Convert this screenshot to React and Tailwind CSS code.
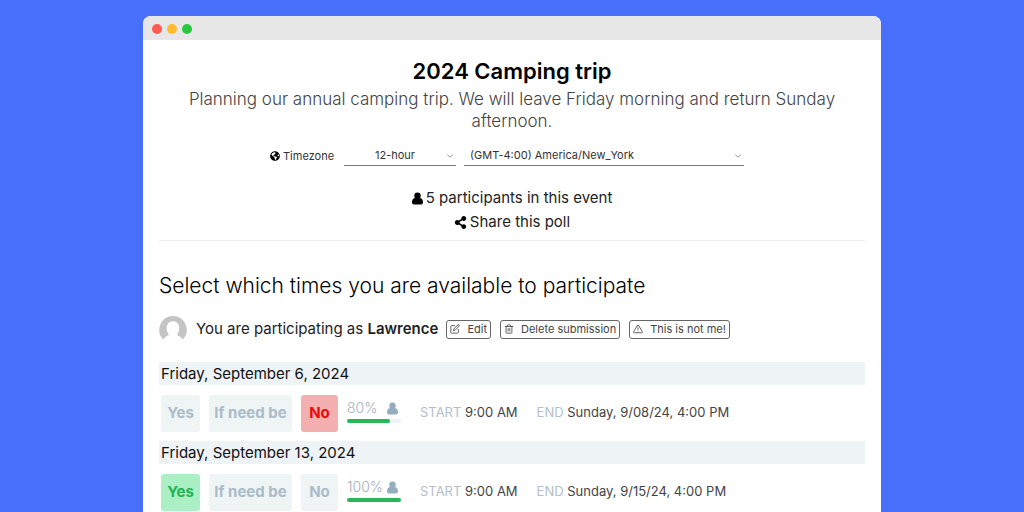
import React from "react";
import { FaGlobeAmericas, FaShareAlt } from "react-icons/fa";
import { FiEdit, FiTrash2, FiAlertTriangle, FiChevronDown } from "react-icons/fi";

const DATES = [
  { day: "Friday, September 6, 2024", answer: "No", percent: 80, start: "9:00 AM", end: "Sunday, 9/08/24, 4:00 PM" },
  { day: "Friday, September 13, 2024", answer: "Yes", percent: 100, start: "9:00 AM", end: "Sunday, 9/15/24, 4:00 PM" },
];

const CHOICES = [
  { label: "Yes", width: "w-[39px]", chosen: "bg-[#aaf0c4] text-[#22b455]" },
  { label: "If need be", width: "w-[83px]", chosen: "bg-[#fdeeb5] text-[#b98a08]" },
  { label: "No", width: "w-[37px]", chosen: "bg-[#f4b0b0] text-[#e80b0b]" },
];

function Person({ className }) {
  return (
    <svg viewBox="0 0 12 14" fill="currentColor" aria-hidden="true" className={className}>
      <circle cx="6" cy="4" r="3.500" />
      <path d="M2.600 6.600c.9 1.100 2 1.700 3.400 1.700s2.500-.6 3.400-1.700C11.300 6.900 12 8.800 12 11.200c0 1.500-.8 2.300-2.100 2.300H2.100C.8 13.500 0 12.700 0 11.200c0-2.400.7-4.300 2.600-4.600z" />
      <rect x="2.500" y="6.600" width="7" height="3" />
    </svg>
  );
}

function Avatar() {
  return (
    <svg viewBox="0 0 28 28" aria-hidden="true" className="size-7 shrink-0">
      <path
        fill="#c4c4c4"
        d="M14 1a13.800 13.800 0 0 1 9.700 23.500c-1-2-2.900-3-4.500-3.700-.9-.4-1.100-1.500-.5-2.300 1-1.300 1.600-3.200 1.600-5.300 0-4.200-2.500-7-6.300-7s-6.300 2.800-6.300 7c0 2.100.6 4 1.600 5.300.6.800.4 1.900-.5 2.300-1.600.7-3.500 1.700-4.500 3.700A13.800 13.800 0 0 1 14 1z"
      />
    </svg>
  );
}

function Picker({ label, className, selectClass, options }) {
  return (
    <div className={`grid items-center border-b border-[#777] ${className}`}>
      <select
        aria-label={label}
        className={`col-start-1 row-start-1 h-[19px] w-full appearance-none bg-transparent text-[11px] text-[#333] ${selectClass}`}
      >
        {options.map((o) => (
          <option key={o}>{o}</option>
        ))}
      </select>
      <FiChevronDown aria-hidden="true" className="pointer-events-none col-start-1 row-start-1 mr-px size-[10px] justify-self-end text-[#777]" />
    </div>
  );
}

function SmallButton({ icon: Icon, children }) {
  return (
    <button type="button" className="flex h-[19px] items-center gap-[7px] rounded-[3px] border border-[#666] px-[3px] text-[11px] text-[#444]">
      <Icon aria-hidden="true" className="size-[10px]" />
      {children}
    </button>
  );
}

function DateOption({ day, answer, percent, start, end }) {
  return (
    <section>
      <h3 className="h-[23px] bg-[#eef3f6] px-[2px] text-[15px] leading-[23px] text-[#111]">{day}</h3>
      <div className="flex h-14 items-center pl-[2px]">
        <div className="flex gap-[9px]">
          {CHOICES.map(({ label, width, chosen }) => (
            <button
              key={label}
              type="button"
              aria-pressed={label === answer}
              className={`h-[37px] rounded-[3px] text-[15px] font-bold ${width} ${label === answer ? chosen : "bg-[#eff4f5] text-[#aabcc8]"}`}
            >
              {label}
            </button>
          ))}
        </div>
        <div className="ml-[9px] flex w-[54px] flex-col gap-[3px] pb-[3px]">
          <div className="flex h-4 items-center justify-between pr-[3px] text-[14px] leading-4 font-light text-[#a3b0b8]">
            <span>{percent}%</span>
            <Person className="h-[13px] w-[11px] text-[#94adbf]" />
          </div>
          <div className="h-1 rounded-full bg-[#eef3f4]">
            <div className="h-1 rounded-full bg-[#27b859]" style={{ width: `${percent}%` }} />
          </div>
        </div>
        <p className="ml-[19px] text-[13px] text-[#444]">
          <span className="text-[#b3c0c7]">START</span> {start}
        </p>
        <p className="ml-[19px] text-[13px] text-[#444]">
          <span className="text-[#b3c0c7]">END</span> {end}
        </p>
      </div>
    </section>
  );
}

export default function App() {
  return (
    <div className="flex h-screen flex-col overflow-hidden bg-[#476ffa] px-[143px] pt-4 font-['Inter',sans-serif]">
      <div className="flex-1 rounded-t-lg bg-white">
        <div className="flex h-6 items-center gap-[5px] rounded-t-lg bg-[#e7e7e7] px-[9px] pt-[2px]">
          <span className="size-[10px] rounded-full bg-[#fe5a52]" />
          <span className="size-[10px] rounded-full bg-[#febb2d]" />
          <span className="size-[10px] rounded-full bg-[#28c840]" />
        </div>
        <main className="px-4">
          <header className="flex flex-col items-center border-b border-[#eee] pt-[15px] pb-[6px] text-center">
            <h1 className="text-[22px] leading-8 font-semibold text-black">2024 Camping trip</h1>
            <p className="mt-px px-5 text-[17px] leading-[22px] font-light text-[#444]">
              Planning our annual camping trip. We will leave Friday morning and return Sunday afternoon.
            </p>
            <div className="mt-[14px] flex items-center">
              <span className="flex w-[74px] items-center gap-[3px] text-[11px] text-[#333]">
                <FaGlobeAmericas aria-hidden="true" className="size-[10px] text-black" />
                Timezone
              </span>
              <Picker label="Hour format" className="w-28" selectClass="pr-[10px] text-center" options={["12-hour", "24-hour"]} />
              <Picker label="Timezone" className="mr-[10px] ml-2 w-[280px]" selectClass="pl-[6px]" options={["(GMT-4:00) America/New_York", "(GMT-5:00) America/Chicago"]} />
            </div>
            <p className="mt-5 flex items-center gap-[3px] text-[15px] leading-6 text-[#222]">
              <Person className="h-[13px] w-[11px] text-black" />5 participants in this event
            </p>
            <a href="#share" className="flex items-center gap-[3px] text-[15px] leading-6 text-[#222]">
              <FaShareAlt aria-hidden="true" className="size-[13px] text-black" />
              Share this poll
            </a>
          </header>
          <h2 className="mt-[31px] text-[21px] leading-7 font-light text-black">Select which times you are available to participate</h2>
          <div className="mt-[15px] mb-[19px] flex items-center">
            <Avatar />
            <p className="ml-[9px] text-[15px] text-[#222]">
              You are participating as <strong className="font-semibold">Lawrence</strong>
            </p>
            <div className="ml-2 flex gap-[9px]">
              <SmallButton icon={FiEdit}>Edit</SmallButton>
              <SmallButton icon={FiTrash2}>Delete submission</SmallButton>
              <SmallButton icon={FiAlertTriangle}>This is not me!</SmallButton>
            </div>
          </div>
          {DATES.map((d) => (
            <DateOption key={d.day} {...d} />
          ))}
        </main>
      </div>
    </div>
  );
}
